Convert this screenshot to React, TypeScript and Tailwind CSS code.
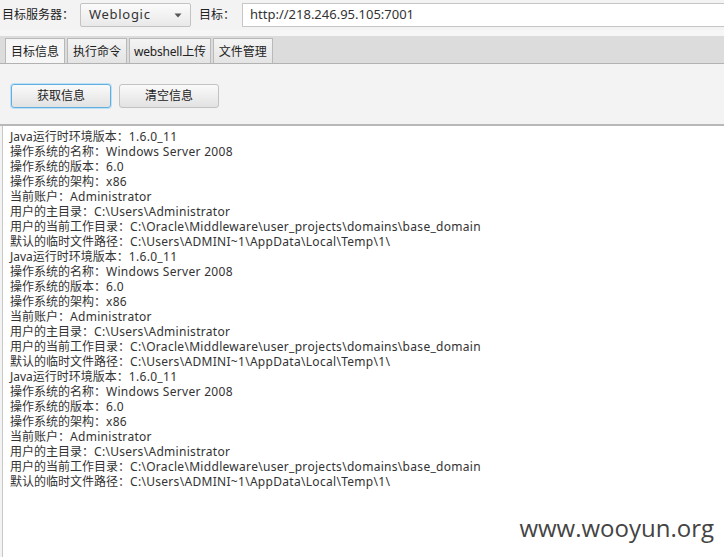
import React from 'react';

const block: [string, string][] = [
  ['Java运行时环境版本：', '1.6.0_11'],
  ['操作系统的名称：', 'Windows Server 2008'],
  ['操作系统的版本：', '6.0'],
  ['操作系统的架构：', 'x86'],
  ['当前账户：', 'Administrator'],
  ['用户的主目录：', 'C:\\Users\\Administrator'],
  ['用户的当前工作目录：', 'C:\\Oracle\\Middleware\\user_projects\\domains\\base_domain'],
  ['默认的临时文件路径：', 'C:\\Users\\ADMINI~1\\AppData\\Local\\Temp\\1\\'],
];

const lines = [...block, ...block, ...block];

const tabs = ['目标信息', '执行命令', 'webshell上传', '文件管理'];

export default function App() {
  return (
    <div
      className="relative w-[724px] h-[557px] overflow-hidden bg-[#f3f3f3] flex flex-col text-[12px] text-[#222]"
      style={{ fontFamily: '"Noto Sans", "Noto Sans CJK SC", sans-serif' }}
    >
      {/* top row */}
      <div className="h-[30px] flex items-center pl-[2px] shrink-0">
        <span className="w-[78px]">目标服务器：</span>
        <div className="w-[111px] h-[24px] border border-[#c3c3c3] rounded-[2px] bg-gradient-to-b from-[#fbfbfb] to-[#e9e9e9] flex items-center pl-[8px] pr-[8px] text-[#333]">
          <span className="flex-1 text-[13px] tracking-[0.7px]">Weblogic</span>
          <svg width="8" height="5" viewBox="0 0 8 5">
            <path d="M0.5 0.5 H7.5 L4 4.5 Z" fill="#555" />
          </svg>
        </div>
        <span className="ml-[8px] w-[43px]">目标：</span>
        <div className="flex-1 h-[24px] border border-[#c6c6c6] border-r-0 bg-white flex items-center pl-[7px] text-[13px] text-[#333]">
          http://218.246.95.105:7001
        </div>
      </div>
      <div className="h-[6px] bg-[#f6f6f6] shrink-0" />

      {/* tab bar */}
      <div className="h-[28px] bg-[#dcdcdc] border-b border-[#b2b2b2] flex items-end pl-[5px] gap-[2px] shrink-0">
        {tabs.map((t, i) => (
          <div
            key={t}
            className={
              'h-[25px] pt-[2px] flex items-center border border-b-0 border-[#b9b9b9] ' +
              (i === 2 ? 'px-[4px] tracking-[-0.2px] ' : 'px-[5px] ') +
              (i === 0 ? 'bg-[#f6f6f6]' : 'bg-gradient-to-b from-[#f4f4f4] to-[#e4e4e4]')
            }
          >
            {t}
          </div>
        ))}
      </div>

      {/* button panel */}
      <div className="h-[62px] flex items-start pt-[20px] pl-[11px] gap-[8px] border-b-2 border-[#b8b8b8] shrink-0">
        <button className="w-[100px] h-[24px] rounded-[3px] border border-[#5fb0e0] bg-gradient-to-b from-[#fafafa] to-[#e2e2e2] text-[#222] shadow-[0_0_0_1px_#bfe1f5]">
          获取信息
        </button>
        <button className="w-[100px] h-[24px] rounded-[3px] border border-[#c2c2c2] bg-gradient-to-b from-[#fafafa] to-[#e2e2e2] text-[#222]">
          清空信息
        </button>
      </div>

      {/* output */}
      <div className="flex-1 ml-[2px] bg-white border-l border-[#c8c8c8] pt-[3px] pl-[7px] text-[#333]">
        {lines.map(([k, v], i) => (
          <div key={i} className="h-[15px] leading-[15px] whitespace-pre">
            {k}
            <span className="tracking-[0.3px]">{v}</span>
          </div>
        ))}
      </div>

      <div
        className="absolute right-[10px] bottom-[15px] text-[24px] leading-[28px] text-[#444]"
        style={{ fontFamily: '"Open Sans", sans-serif' }}
      >
        www.wooyun.org
      </div>
    </div>
  );
}
